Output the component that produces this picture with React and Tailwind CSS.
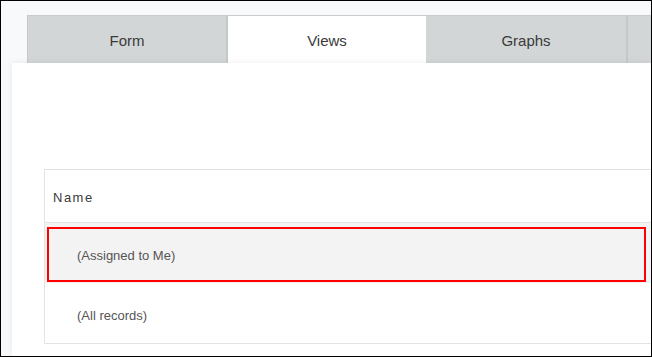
import React from 'react';

const tabs = [
  { label: 'Form', cls: 'w-[201px] bg-[#d3d6d7] border-l border-r-2 border-[#c6c9ca]' },
  { label: 'Views', cls: 'w-[198px] bg-white' },
  { label: 'Graphs', cls: 'w-[202px] bg-[#d3d6d7] border-r-2 border-[#c6c9ca]' },
  { label: '', cls: 'flex-1 bg-[#d3d6d7]' },
];

const rows = ['(Assigned to Me)', '(All records)'];

export default function App() {
  return (
    <div
      className="w-[652px] h-[357px] border border-black bg-[#f7f9fa] overflow-hidden flex flex-col"
      style={{ fontFamily: '"Liberation Sans", Arial, sans-serif' }}
    >
      {/* tab strip */}
      <div className="mt-[14px] ml-[26px] flex h-[48px] border-t border-[#c8cbcc] shrink-0">
        {tabs.map((t, i) => (
          <div
            key={i}
            className={`${t.cls} flex items-center justify-center pt-[4px] text-[15px] text-[#3a3a3a]`}
          >
            {t.label}
          </div>
        ))}
      </div>

      {/* white panel */}
      <div className="ml-[11px] flex-1 bg-white shadow-[0_0_7px_rgba(0,0,0,0.07)] pt-[106px] pl-[32px]">
        <div className="border-l border-t border-b border-[#e3e3e3]">
          <div className="h-[53px] flex items-center pl-[8px] pt-[4px] border-b border-[#e3e3e3] text-[13px] tracking-[1.5px] text-[#3a3a3a]">
            Name
          </div>
          {rows.map((r, i) => (
            <div
              key={r}
              className={`relative h-[60px] flex items-center pl-[32px] pt-[5px] text-[13px] text-[#555] ${i === 0 ? 'bg-[#f3f3f3]' : 'bg-white'}`}
            >
              {r}
              {i === 0 && (
                <div className="absolute top-[4px] left-[2px] w-[599px] h-[55px] border-2 border-[#ff0000]" />
              )}
            </div>
          ))}
        </div>
      </div>
    </div>
  );
}
